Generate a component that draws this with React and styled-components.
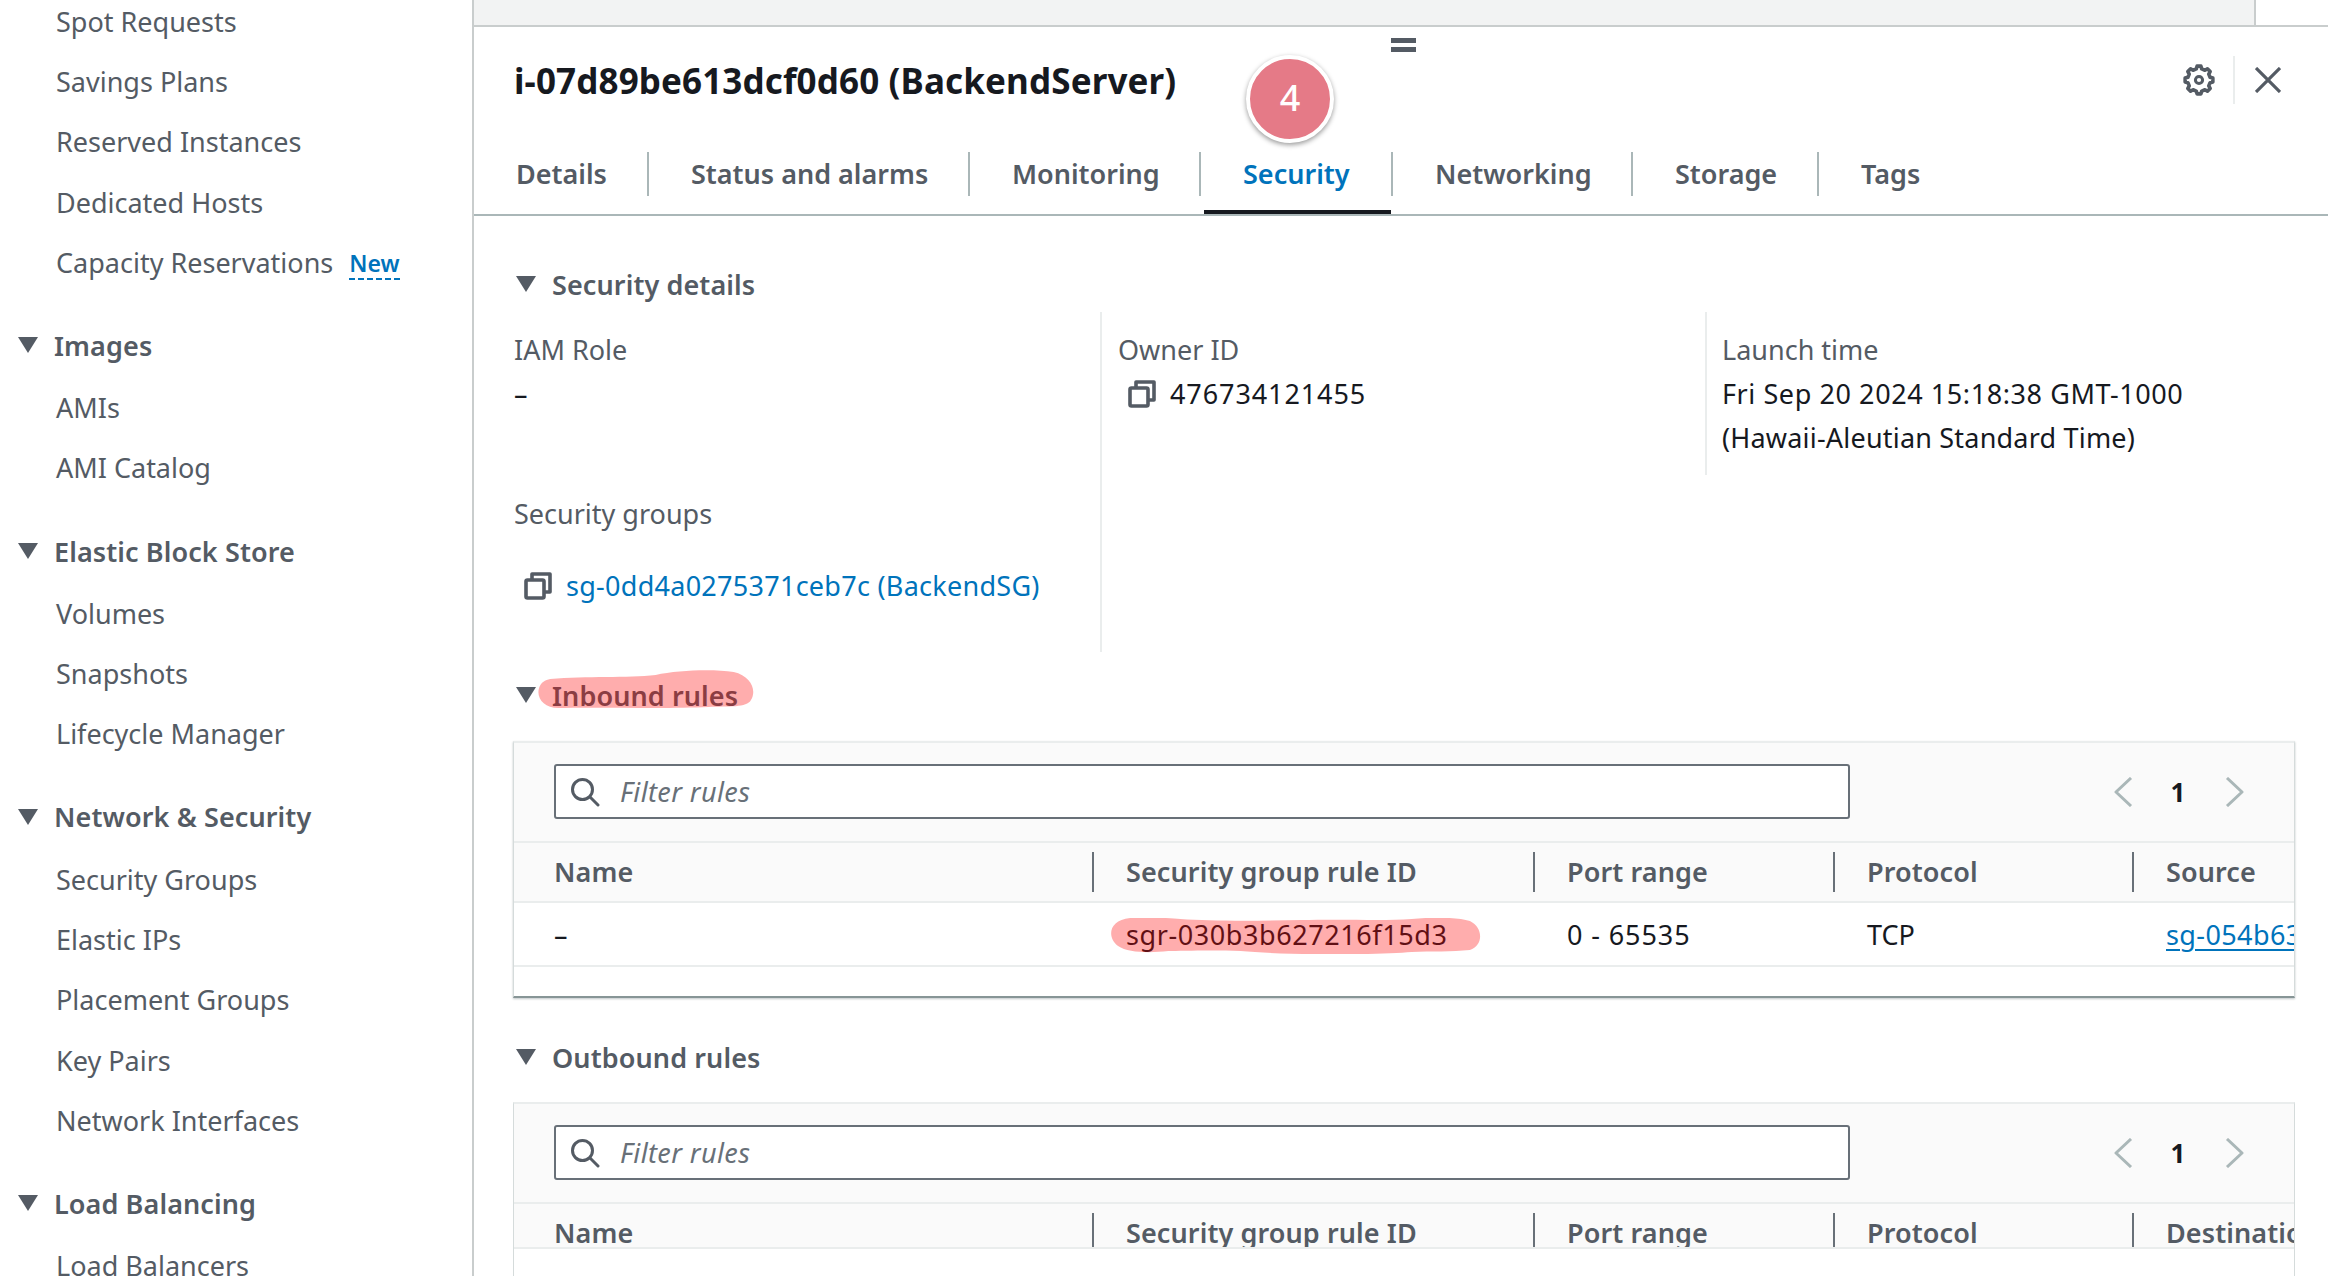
import React from "react";
import styled, { createGlobalStyle } from "styled-components";

const GlobalStyle = createGlobalStyle`
  html, body {
    margin: 0;
    padding: 0;
    height: 100%;
    background: #fff;
    overflow: hidden;
  }
  body {
    font-family: "Noto Sans", "Open Sans", sans-serif;
    font-size: 27px;
    color: #16191f;
  }
`;

const COLS = "578px 441px 300px 299px 1fr";

const sidebar = [
  {
    items: [
      { label: "Spot Requests" },
      { label: "Savings Plans" },
      { label: "Reserved Instances" },
      { label: "Dedicated Hosts" },
      { label: "Capacity Reservations", isNew: true },
    ],
  },
  { title: "Images", items: [{ label: "AMIs" }, { label: "AMI Catalog" }] },
  {
    title: "Elastic Block Store",
    items: [{ label: "Volumes" }, { label: "Snapshots" }, { label: "Lifecycle Manager" }],
  },
  {
    title: "Network & Security",
    items: [
      { label: "Security Groups" },
      { label: "Elastic IPs" },
      { label: "Placement Groups" },
      { label: "Key Pairs" },
      { label: "Network Interfaces" },
    ],
  },
  { title: "Load Balancing", items: [{ label: "Load Balancers" }] },
];

const tabs = [
  { label: "Details", width: 135, pad: 2 },
  { label: "Status and alarms", width: 321, pad: 42 },
  { label: "Monitoring", width: 231, pad: 42 },
  { label: "Security", width: 192, pad: 42 },
  { label: "Networking", width: 240, pad: 42 },
  { label: "Storage", width: 186, pad: 42 },
  { label: "Tags", width: 160, pad: 42 },
];

const Page = styled.div`
  display: flex;
  width: 2328px;
  height: 1276px;
  overflow: hidden;
`;

const Sidebar = styled.nav`
  width: 472px;
  flex: none;
  border-right: 2px solid #c9cdcd;
  margin-top: -9px;
  height: 1285px;
`;

const NavSection = styled.div`
  margin-bottom: 23px;
`;

const NavHeading = styled.div`
  display: flex;
  align-items: center;
  height: 60px;
  margin-bottom: 2px;
  padding-left: 18px;
  gap: 16px;
  font-weight: 600;
  color: #545b64;
  letter-spacing: 0.1px;
`;

const NavItem = styled.div`
  display: flex;
  align-items: center;
  height: 60.3px;
  padding-left: 56px;
  color: #545b64;
  white-space: nowrap;
`;

const NewTag = styled.span`
  margin: 3px 0 0 16px;
  color: #0073bb;
  font-size: 23px;
  font-weight: 600;
  line-height: 30px;
  border-bottom: 2px dashed #0073bb;
`;

const Caret = styled.span`
  flex: none;
  width: 0;
  height: 0;
  border-left: 10px solid transparent;
  border-right: 10px solid transparent;
  border-top: 16px solid #545b64;
`;

const Main = styled.main`
  flex: 1;
  min-width: 0;
  position: relative;
`;

const TopBar = styled.div`
  height: 25px;
  margin-right: 72px;
  background: #f2f3f3;
  border-right: 2px solid #c9cdcd;
`;

const Panel = styled.section`
  border-top: 2px solid #c9cdcd;
`;

const Header = styled.header`
  display: flex;
  align-items: center;
  height: 106px;
  padding: 0 47px 0 40px;
`;

const Title = styled.h1`
  margin: 0;
  flex: 1;
  font-size: 35px;
  font-weight: 700;
  letter-spacing: 0.13px;
  color: #16191f;
`;

const HeaderDivider = styled.span`
  width: 2px;
  height: 48px;
  margin: 0 20px 0 18px;
  background: #eaeded;
`;

const Handle = styled.div`
  position: absolute;
  left: 917px;
  top: 38px;
  width: 25px;
  height: 14px;
  border-top: 5px solid #545b64;
  border-bottom: 5px solid #545b64;
  box-sizing: border-box;
`;

const Badge = styled.div`
  position: absolute;
  left: 772px;
  top: 55px;
  width: 88px;
  height: 88px;
  box-sizing: border-box;
  padding-bottom: 4px;
  display: flex;
  align-items: center;
  justify-content: center;
  border-radius: 50%;
  border: 4px solid #fff;
  background: #e57a87;
  box-shadow: 0 2px 5px rgba(0, 0, 0, 0.4);
  color: #fff;
  font-size: 36px;
  font-weight: 500;
`;

const TabBar = styled.div`
  display: flex;
  height: 83px;
  box-sizing: border-box;
  padding: 19px 0 0 40px;
  border-bottom: 2px solid #aab7b8;
`;

const Tab = styled.div`
  position: relative;
  height: 62px;

  ${(p) =>
    p.$active &&
    `&::after {
      content: "";
      position: absolute;
      left: 3px;
      right: 2px;
      bottom: 0;
      height: 4px;
      background: #16191f;
    }`}
`;

const TabLabel = styled.div`
  display: flex;
  align-items: center;
  width: ${(p) => p.$width}px;
  height: 44px;
  padding: 0 0 2px ${(p) => p.$pad}px;
  box-sizing: border-box;
  border-right: ${(p) => (p.$last ? "none" : "2px solid #aab7b8")};
  font-weight: 600;
  white-space: nowrap;
  color: ${(p) => (p.$active ? "#0073bb" : "#545b64")};
`;

const SectionHead = styled.div`
  position: relative;
  display: flex;
  align-items: center;
  height: 40px;
  margin: ${(p) => p.$top}px 0 0 42px;
  gap: 16px;
  font-weight: 600;
  color: #545b64;
  letter-spacing: 0.1px;
`;

const DetailsGrid = styled.div`
  display: grid;
  grid-template-columns: 588px 605px 1fr;
  align-items: start;
  margin: 8px 0 0 40px;
`;

const DetailCol = styled.div`
  min-height: ${(p) => p.$height}px;
  box-sizing: border-box;
  padding: 20px 0 0 ${(p) => p.$pad}px;
  border-right: ${(p) => (p.$line ? "2px solid #eaeded" : "none")};
`;

const FieldLabel = styled.div`
  height: 36px;
  line-height: 36px;
  margin-top: ${(p) => p.$top || 0}px;
  color: #545b64;
`;

const FieldValue = styled.div`
  display: flex;
  align-items: center;
  gap: 14px;
  min-height: 44px;
  line-height: 44px;
  margin-top: ${(p) => (p.$top === undefined ? 4 : p.$top)}px;
  padding-left: ${(p) => p.$pad || 0}px;
  letter-spacing: ${(p) => p.$spacing || 0}px;
`;

const Link = styled.span`
  color: #0073bb;
  white-space: nowrap;
  ${(p) => p.$underline && "text-decoration: underline; text-decoration-thickness: 2px; text-underline-offset: 4px;"}
`;

const Card = styled.div`
  margin: ${(p) => p.$top}px 33px 0 39px;
  border: 1px solid #d5dbdb;
  border-top: 2px solid #eaeded;
  border-bottom: ${(p) => (p.$open ? "none" : "2px solid #879596")};
  box-shadow: ${(p) => (p.$open ? "none" : "0 1px 2px rgba(0, 28, 36, 0.25)")};
  overflow: hidden;
`;

const CardToolbar = styled.div`
  display: flex;
  align-items: flex-start;
  height: 100px;
  box-sizing: border-box;
  padding: 21px 0 0 40px;
  background: #fafafa;
  border-bottom: 2px solid #eaeded;
`;

const SearchBox = styled.div`
  display: flex;
  align-items: center;
  gap: 20px;
  width: 1296px;
  height: 55px;
  box-sizing: border-box;
  padding-left: 14px;
  background: #fff;
  border: 2px solid #687078;
  border-radius: 3px;
  color: #687078;
  font-style: italic;
  letter-spacing: 0.4px;
`;

const Pager = styled.div`
  display: flex;
  align-items: center;
  height: 55px;
  margin-left: 263px;
`;

const PageNumber = styled.span`
  width: 92px;
  padding-right: 2px;
  box-sizing: border-box;
  text-align: center;
  font-weight: 700;
  font-size: 26px;
`;

const HeadRow = styled.div`
  display: grid;
  grid-template-columns: ${COLS};
  height: ${(p) => p.$height}px;
  box-sizing: border-box;
  padding-top: 9px;
  background: #fafafa;
  border-bottom: 2px solid #eaeded;
  overflow: hidden;
`;

const HeadCell = styled.div`
  display: flex;
  align-items: center;
  height: 40px;
  box-sizing: border-box;
  padding: 0 0 2px ${(p) => (p.$first ? 40 : 32)}px;
  border-left: ${(p) => (p.$first ? "none" : "2px solid #687078")};
  font-weight: 600;
  color: #545b64;
  letter-spacing: 0.1px;
  white-space: nowrap;
`;

const BodyRow = styled.div`
  display: grid;
  grid-template-columns: ${COLS};
  align-items: center;
  height: 64px;
  box-sizing: border-box;
  border-bottom: 2px solid #eaeded;
`;

const BodyCell = styled.div`
  padding-left: ${(p) => (p.$first ? 40 : 34)}px;
  white-space: nowrap;
  letter-spacing: ${(p) => p.$spacing || 0}px;
`;

const CardFoot = styled.div`
  height: ${(p) => p.$height}px;
`;

const Marked = styled.span`
  position: relative;
  display: inline-block;
`;

const Scribble = styled.svg`
  position: absolute;
  left: ${(p) => p.$left}px;
  top: ${(p) => p.$top}px;
  width: ${(p) => p.$w}px;
  height: ${(p) => p.$h}px;
  pointer-events: none;
`;

const Icon = styled.svg`
  flex: none;
  display: block;
`;

// outline of the cog: 8 teeth, each a short outer run then a short inner run
function gearPoints() {
  const pts = [];
  for (let i = 0; i < 8; i++) {
    const a = (i * Math.PI) / 4 - Math.PI / 2;
    [
      [-0.24, 11.4],
      [-0.14, 14],
      [0.14, 14],
      [0.24, 11.4],
    ].forEach(([da, r]) => {
      pts.push(`${(16 + r * Math.cos(a + da)).toFixed(2)},${(16 + r * Math.sin(a + da)).toFixed(2)}`);
    });
  }
  return pts.join(" ");
}

function GearIcon() {
  return (
    <Icon width="32" height="32" viewBox="0 0 32 32" fill="none" stroke="#545b64">
      <polygon points={gearPoints()} strokeWidth="3.6" strokeLinejoin="round" />
      <circle cx="16" cy="16" r="3.6" strokeWidth="3" />
    </Icon>
  );
}

function CopyIcon() {
  return (
    <Icon width="28" height="28" viewBox="0 0 28 28" fill="none" stroke="#545b64" strokeWidth="3.6">
      <rect x="2" y="8" width="18" height="18" rx="1.5" strokeLinejoin="round" />
      <path d="M8 7V2h18v18h-5" strokeLinejoin="round" />
    </Icon>
  );
}

function SearchIcon() {
  return (
    <Icon width="30" height="30" viewBox="0 0 30 30" fill="none" stroke="#545b64" strokeWidth="3">
      <circle cx="12.5" cy="12.5" r="10" />
      <path d="M20 20l8 8" strokeLinecap="round" />
    </Icon>
  );
}

function Chevron({ right }) {
  return (
    <Icon width="20" height="30" viewBox="0 0 20 30" fill="none" stroke="#aab7b8" strokeWidth="3">
      <path d={right ? "M2 1l15 14L2 29" : "M18 1L3 15l15 14"} strokeLinejoin="round" />
    </Icon>
  );
}

function RulesCard({ top, headHeight, lastHead, open, children }) {
  const heads = ["Name", "Security group rule ID", "Port range", "Protocol", lastHead];
  return (
    <Card $top={top} $open={open}>
      <CardToolbar>
        <SearchBox>
          <SearchIcon />
          Filter rules
        </SearchBox>
        <Pager>
          <Chevron />
          <PageNumber>1</PageNumber>
          <Chevron right />
        </Pager>
      </CardToolbar>
      <HeadRow $height={headHeight}>
        {heads.map((h, i) => (
          <HeadCell key={h} $first={i === 0}>
            {h}
          </HeadCell>
        ))}
      </HeadRow>
      {children}
    </Card>
  );
}

export default function App() {
  return (
    <Page>
      <GlobalStyle />
      <Sidebar>
        {sidebar.map((section, i) => (
          <NavSection key={i}>
            {section.title && (
              <NavHeading>
                <Caret />
                {section.title}
              </NavHeading>
            )}
            {section.items.map((item) => (
              <NavItem key={item.label}>
                {item.label}
                {item.isNew && <NewTag>New</NewTag>}
              </NavItem>
            ))}
          </NavSection>
        ))}
      </Sidebar>
      <Main>
        <TopBar />
        <Panel>
          <Handle />
          <Badge>4</Badge>
          <Header>
            <Title>i-07d89be613dcf0d60 (BackendServer)</Title>
            <GearIcon />
            <HeaderDivider />
            <Icon width="26" height="26" viewBox="0 0 26 26" fill="none" stroke="#545b64" strokeWidth="3.2">
              <path d="M1 1l24 24M25 1L1 25" />
            </Icon>
          </Header>
          <TabBar>
            {tabs.map((t, i) => (
              <Tab key={t.label} $active={t.label === "Security"}>
                <TabLabel
                  $width={t.width}
                  $pad={t.pad}
                  $active={t.label === "Security"}
                  $last={i === tabs.length - 1}
                >
                  {t.label}
                </TabLabel>
              </Tab>
            ))}
          </TabBar>

          <SectionHead $top={48}>
            <Caret />
            Security details
          </SectionHead>
          <DetailsGrid>
            <DetailCol $height={340} $pad={0} $line>
              <FieldLabel>IAM Role</FieldLabel>
              <FieldValue>–</FieldValue>
              <FieldLabel $top={80}>Security groups</FieldLabel>
              <FieldValue $top={32} $pad={10} $spacing={0.27}>
                <CopyIcon />
                <Link>sg-0dd4a0275371ceb7c (BackendSG)</Link>
              </FieldValue>
            </DetailCol>
            <DetailCol $height={163} $pad={16} $line>
              <FieldLabel>Owner ID</FieldLabel>
              <FieldValue $pad={10} $spacing={0.9}>
                <CopyIcon />
                476734121455
              </FieldValue>
            </DetailCol>
            <DetailCol $height={163} $pad={15}>
              <FieldLabel>Launch time</FieldLabel>
              <FieldValue $spacing={0.58}>Fri Sep 20 2024 15:18:38 GMT-1000</FieldValue>
              <FieldValue $top={0} $spacing={0.2}>
                (Hawaii-Aleutian Standard Time)
              </FieldValue>
            </DetailCol>
          </DetailsGrid>

          <SectionHead $top={23}>
            <Caret />
            Inbound rules
            <Scribble $left={20} $top={-5} $w={218} $h={38} viewBox="0 0 215 38" preserveAspectRatio="none">
              <path
                d="M14 9C50 6 90 8 118 5C140 0 175 -1 195 2C212 6 218 20 212 30C208 38 190 36 170 37C130 39 60 37 22 38C8 38 0 28 3 18C5 12 9 10 14 9Z"
                fill="rgba(255,0,0,0.32)"
              />
            </Scribble>
          </SectionHead>
          <RulesCard top={26} headHeight={60} lastHead="Source">
            <BodyRow>
              <BodyCell $first>–</BodyCell>
              <BodyCell $spacing={0.58}>
                <Marked>
                  sgr-030b3b627216f15d3
                  <Scribble $left={-16} $top={2} $w={371} $h={36} viewBox="0 0 369 36" preserveAspectRatio="none">
                    <path
                      d="M20 0C40 -1 60 0 70 1C100 3 140 3 190 2C240 1 270 3 300 1C320 -1 345 -1 358 3C372 10 371 28 358 32C340 34 320 33 300 34C270 37 170 37 130 33C100 32 70 33 58 33C40 35 18 35 8 28C-3 20 -2 2 20 0Z"
                      fill="rgba(255,0,0,0.32)"
                    />
                  </Scribble>
                </Marked>
              </BodyCell>
              <BodyCell $spacing={0.9}>0 - 65535</BodyCell>
              <BodyCell>TCP</BodyCell>
              <BodyCell $spacing={0.4}>
                <Link $underline>sg-054b63a1f0c2</Link>
              </BodyCell>
            </BodyRow>
            <CardFoot $height={29} />
          </RulesCard>

          <SectionHead $top={39}>
            <Caret />
            Outbound rules
          </SectionHead>
          <RulesCard top={25} headHeight={45} lastHead="Destination" open>
            <CardFoot $height={60} />
          </RulesCard>
        </Panel>
      </Main>
    </Page>
  );
}
